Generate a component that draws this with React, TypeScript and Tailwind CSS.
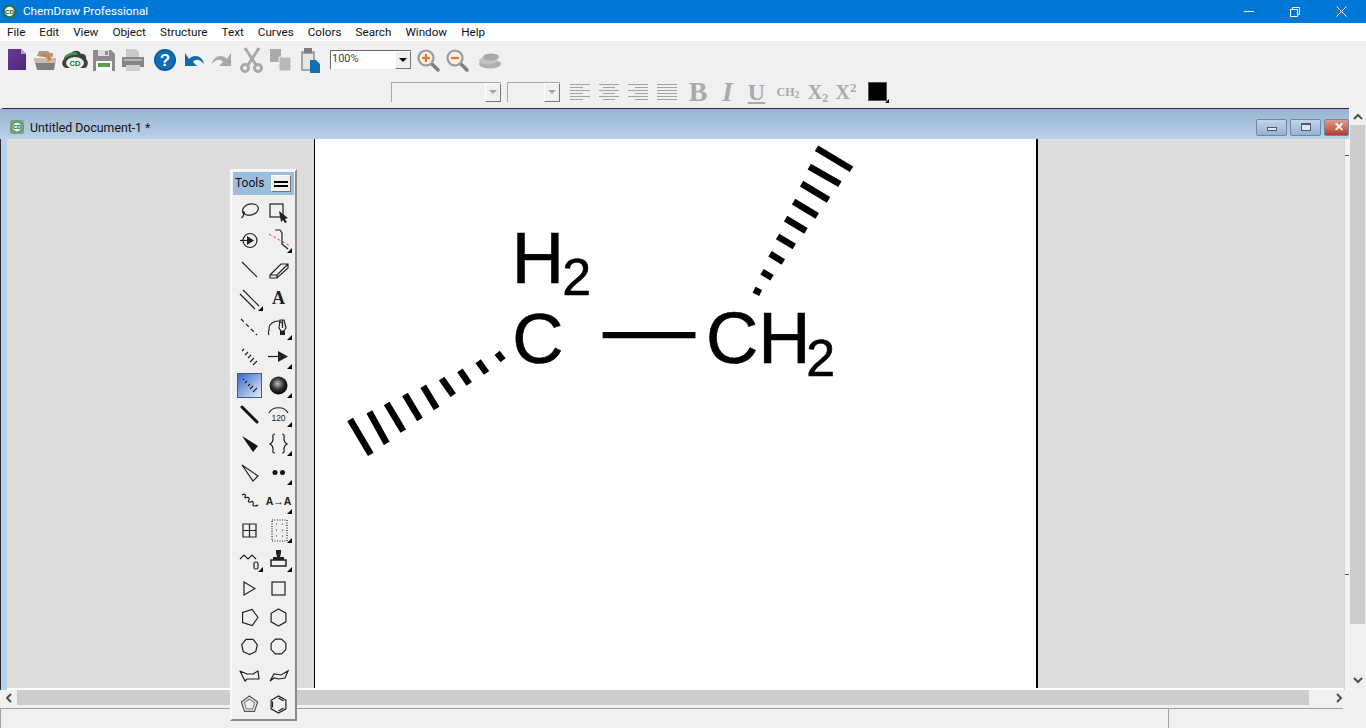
import React from 'react';

const menus = ['File', 'Edit', 'View', 'Object', 'Structure', 'Text', 'Curves', 'Colors', 'Search', 'Window', 'Help'];

const Svg: React.FC<{ w?: number; h?: number; children: React.ReactNode }> = ({ w = 29, h = 29, children }) => (
  <svg width={w} height={h} viewBox={`0 0 ${w} ${h}`} className="block shrink-0">
    {children}
  </svg>
);

const CdLogo: React.FC<{ size: number; square?: boolean }> = ({ size, square }) => (
  <svg width={size} height={size} viewBox="0 0 16 16" className="block shrink-0">
    {square && <rect x="0" y="0" width="16" height="16" rx="2" fill="#8f9a94" />}
    <circle cx="8" cy="8" r="7.5" fill={square ? '#5aa568' : '#2f6f45'} />
    <circle cx="8" cy="8" r="5" fill="#eaf5e8" />
    <text x="8" y="10.5" textAnchor="middle" fontSize="6.5" fontWeight="700" fill="#1f5a35" fontFamily="Liberation Sans, sans-serif">CD</text>
  </svg>
);

// main toolbar icons, all drawn on a 29x29 cell
const NewIcon = () => (
  <Svg>
    <defs>
      <linearGradient id="newdoc" x1="0" y1="0" x2="1" y2="1">
        <stop offset="0" stopColor="#6a3a97" />
        <stop offset="1" stopColor="#4f2773" />
      </linearGradient>
    </defs>
    <path d="M7 4h13l5 5v16H7z" fill="url(#newdoc)" />
    <path d="M20 4l5 5h-5z" fill="#b9a3cc" />
  </Svg>
);
const OpenIcon = () => (
  <Svg>
    <path d="M7 11l2-5h9l2 2h3v4z" fill="#a69b91" />
    <path d="M4 13h22l-2 12H7z" fill="#7f7f7f" />
    <path d="M4 13h22l-1 5H5z" fill="#c3bdb6" />
    <path d="M9 12c3-4 7-4 9 0v-3l4 5-5 3 1-3c-2-2-5-3-9-2z" fill="#e0792b" />
  </Svg>
);
const CloudIcon = () => (
  <Svg>
    <path d="M6 23c-4-1-5-6-2-9 0-4 4-5 6-4 2-5 9-6 11-1 3-1 6 2 5 5 3 2 2 8-1 9z" fill="#3f3f3f" />
    <ellipse cx="15" cy="18" rx="9" ry="6" fill="#e8f3e6" />
    <path d="M4 14c1-6 7-6 9-7 3-1 4 1 5 3-4-1-9 0-14 4z" fill="#3d9c53" />
    <text x="15" y="21" textAnchor="middle" fontSize="7.5" fontWeight="700" fill="#1f6a38" fontFamily="Liberation Sans, sans-serif">CD</text>
  </Svg>
);
const SaveIcon = () => (
  <Svg>
    <path d="M4 5h18l4 4v17H4z" fill="#8b8b8b" />
    <rect x="9" y="5" width="11" height="6" fill="#dedede" />
    <rect x="16" y="6" width="3" height="4" fill="#8b8b8b" />
    <rect x="7" y="16" width="16" height="10" fill="#ffffff" />
    <rect x="9" y="18" width="12" height="4" fill="#5d9c48" />
  </Svg>
);
const PrintIcon = () => (
  <Svg>
    <path d="M8 4h10l3 3v6H8z" fill="#c9c9c9" />
    <path d="M4 12h22v10H4z" fill="#858585" />
    <rect x="8" y="20" width="14" height="6" fill="#cfcfcf" />
    <rect x="6" y="14" width="18" height="2" fill="#b5b5b5" />
  </Svg>
);
const HelpIcon = () => (
  <Svg>
    <circle cx="15" cy="15" r="11" fill="#0b5a9c" />
    <circle cx="15" cy="15" r="9.5" fill="#0f6cb5" />
    <text x="15" y="21" textAnchor="middle" fontSize="17" fontWeight="700" fill="#ffffff" fontFamily="Liberation Sans, sans-serif">?</text>
  </Svg>
);
const UndoIcon = ({ color = '#0d6aab' }: { color?: string }) => (
  <Svg>
    <path d="M6 8v13h12l-4-4c2-3 6-3 9 0l2 2c-1-7-9-11-15-5z" fill={color} />
  </Svg>
);
const CutIcon = () => (
  <Svg>
    <g stroke="#a9a9a9" strokeWidth="3" fill="none">
      <path d="M8 3l11 17M22 3L11 20" />
      <circle cx="8" cy="23" r="3.5" />
      <circle cx="21" cy="23" r="3.5" />
    </g>
  </Svg>
);
const CopyIcon = () => (
  <Svg>
    <path d="M4 4h11l0 13H4z" fill="#a9a9a9" />
    <path d="M13 12h12v14H13z" fill="#b8b8b8" stroke="#efefef" />
  </Svg>
);
const PasteIcon = () => (
  <Svg>
    <rect x="6" y="6" width="14" height="20" rx="1" fill="#a5a5a5" />
    <rect x="9" y="3" width="8" height="5" fill="#7d7d7d" />
    <rect x="8" y="9" width="10" height="15" fill="#e5e5e5" />
    <path d="M15 15h6l4 4v9H15z" fill="#166fb0" />
  </Svg>
);
const ZoomIcon = ({ plus }: { plus?: boolean }) => (
  <Svg>
    <path d="M19 19l6 6" stroke="#808080" strokeWidth="3.5" strokeLinecap="round" />
    <circle cx="13" cy="13" r="7.5" fill="#f6efe4" stroke="#9b9b9b" strokeWidth="2.2" />
    <path d="M9 13h8" stroke="#e0792b" strokeWidth="2.2" />
    {plus && <path d="M13 9v8" stroke="#e0792b" strokeWidth="2.2" />}
  </Svg>
);
const LayersIcon = () => (
  <Svg>
    <ellipse cx="15" cy="19" rx="11" ry="4.5" fill="#b0b0b0" />
    <ellipse cx="13" cy="15.5" rx="9" ry="4" fill="#c4c4c4" />
    <ellipse cx="16" cy="12" rx="8" ry="3.5" fill="#a8a8a8" />
  </Svg>
);

const Combo: React.FC<{ className: string; text?: string; disabled?: boolean }> = ({ className, text, disabled }) => (
  <div className={`flex shrink-0 border-t border-l ${disabled ? 'border-[#a8a8a8]' : 'border-[#6d6d6d]'} ${className}`}>
    <div className="flex-1 text-[11px] leading-[15px] pl-px text-[#444]">{text}</div>
    <div className="w-[16px] bg-[#f0f0f0] border border-[#fff] border-r-[#777] border-b-[#777] flex items-center justify-center">
      <div className={`w-0 h-0 border-x-[4px] border-x-transparent border-t-[4px] ${disabled ? 'border-t-[#a5a5a5]' : 'border-t-black'}`} />
    </div>
  </div>
);

const AlignIcon: React.FC<{ lines: [number, number][] }> = ({ lines }) => (
  <Svg w={24} h={18}>
    {lines.map(([a, b], i) => (
      <path key={i} d={`M${a} ${1.5 + i * 3}H${b}`} stroke="#a3a3a3" strokeWidth="1" />
    ))}
  </Svg>
);

const FormatText: React.FC<{ className: string; children: React.ReactNode }> = ({ className, children }) => (
  <div className={`text-[#aaaaaa] font-bold font-['Liberation_Serif',serif] shrink-0 text-center ${className}`}>{children}</div>
);

const Corner = () => <path d="M28 22v5h-5z" fill="#000" />;

const stroke = { stroke: '#222', fill: 'none', strokeWidth: 1.2 };

const poly = (n: number, r: number, rot: number) =>
  Array.from({ length: n }, (_, i) => {
    const a = rot + (i * 2 * Math.PI) / n;
    return `${(14.5 + r * Math.cos(a)).toFixed(1)},${(14.5 + r * Math.sin(a)).toFixed(1)}`;
  }).join(' ');

// palette rows, left tool then right tool
const tools: React.ReactNode[] = [
  <g key="lasso">
    <ellipse cx="15.5" cy="12.5" rx="8" ry="5.5" transform="rotate(-15 15.5 12.5)" {...stroke} />
    <path d="M8.5 15c1 2 0 4-2 6" {...stroke} />
    <circle cx="8.5" cy="15.5" r="1.2" fill="#222" />
  </g>,
  <g key="marquee">
    <rect x="6" y="7" width="13" height="13" {...stroke} />
    <path d="M15 14l9 7-3 1 2 3-2 1-2-3-2 2z" fill="#222" />
  </g>,
  <g key="rotate">
    <circle cx="15" cy="14.5" r="7" {...stroke} />
    <path d="M5 14.5h12" {...stroke} />
    <path d="M12 10l7 4.5-7 4.5z" fill="#222" />
  </g>,
  <g key="perspective">
    <path d="M5 8l21 12" stroke="#e05050" strokeWidth="1" strokeDasharray="3 2" fill="none" />
    <path d="M11 4h5l2 3v11l6 5" {...stroke} />
    <path d="M28 22v5h-5z" fill="#000" />
  </g>,
  <path key="bond" d="M7 7l15 15" {...stroke} />,
  <path key="eraser" d="M6 20l11-11h7v4L13 23H6zM6 20h7v3M13 20l11-11" {...stroke} />,
  <g key="multi">
    <path d="M5 10l15 15M8 6l16 16" {...stroke} />
    <Corner />
  </g>,
  <text key="A" x="14.5" y="20" textAnchor="middle" fontSize="18" fontWeight="700" fill="#222" fontFamily="Liberation Serif, serif">A</text>,
  <path key="dash" d="M6 6l16 16" {...stroke} strokeDasharray="4 3" />,
  <g key="pen">
    <path d="M5 22c-2-3 1-5 0-7 0-4 5-7 9-7 2 0 3 1 4 2" {...stroke} />
    <path d="M16 7h4l2 8-2 3h-3l-2-3z" {...stroke} />
    <path d="M18.5 7v8" {...stroke} />
    <rect x="16" y="18" width="5" height="4" fill="#222" />
    <Corner />
  </g>,
  <path key="hash" d="M7 9l2-2M10 13l3-3M13 16l3-3M15 20l4-4M18 23l4-4" {...stroke} />,
  <g key="arrow">
    <path d="M4 14.5h14" {...stroke} />
    <path d="M14 9l10 5.5-10 5.5z" fill="#222" />
    <Corner />
  </g>,
  <g key="hashsel">
    <defs>
      <linearGradient id="sel" x1="0" y1="0" x2="1" y2="1">
        <stop offset="0" stopColor="#3a66c8" />
        <stop offset="1" stopColor="#e4f2fb" />
      </linearGradient>
    </defs>
    <rect x="2.5" y="2.5" width="24" height="24" fill="url(#sel)" stroke="#3d5a9a" />
    <path d="M8 9l1-1M10 12l2-2M13 15l2-2M15 18l3-3M18 21l4-4" stroke="#222" strokeWidth="1.2" />
  </g>,
  <g key="sphere">
    <defs>
      <radialGradient id="ball" cx="0.45" cy="0.4" r="0.6">
        <stop offset="0" stopColor="#bdbdbd" />
        <stop offset="0.55" stopColor="#333" />
        <stop offset="1" stopColor="#000" />
      </radialGradient>
    </defs>
    <circle cx="14.5" cy="14.5" r="9" fill="url(#ball)" />
    <Corner />
  </g>,
  <path key="bold" d="M7 7l15 15" stroke="#111" strokeWidth="3" strokeLinecap="round" />,
  <g key="angle">
    <path d="M5 13c3-7 16-7 19 0" {...stroke} />
    <text x="14.5" y="21" textAnchor="middle" fontSize="8.5" fill="#222" fontFamily="Liberation Sans, sans-serif">120</text>
    <Corner />
  </g>,
  <path key="wedge" d="M7 7l16 10-5 6z" fill="#111" />,
  <g key="braces">
    <path d="M11 5c-3 0-2 3-2 5 0 3-1 4-3 5 2 1 3 2 3 5 0 2-1 4 2 4M18 5c3 0 2 3 2 5 0 3 1 4 3 5-2 1-3 2-3 5 0 2 1 4-2 4" {...stroke} />
    <Corner />
  </g>,
  <path key="hollow" d="M7 7l16 11-5 5z" {...stroke} />,
  <g key="dots">
    <circle cx="11" cy="14.5" r="2.5" fill="#111" />
    <circle cx="18.5" cy="14.5" r="2.5" fill="#111" />
    <Corner />
  </g>,
  <path key="wave" d="M7 8c3-2 4 0 3 2s3-1 4 1-2 3 0 4 3-2 4 0-1 4 1 4 3 0 4-1" {...stroke} />,
  <g key="aa">
    <text x="14.5" y="18" textAnchor="middle" fontSize="10.5" fontWeight="700" fill="#222" fontFamily="Liberation Sans, sans-serif">A→A</text>
    <Corner />
  </g>,
  <path key="table" d="M8 8h13v13H8zM14.5 8v13M8 14.5h13" {...stroke} />,
  <g key="page">
    <rect x="8" y="4" width="15" height="21" stroke="#222" strokeWidth="1.2" strokeDasharray="1 1.5" fill="none" />
    <path d="M12 8h1M18 8h1M12 14h1M18 14h1M12 20h1M18 20h1" stroke="#333" />
    <Corner />
  </g>,
  <g key="chain">
    <path d="M5 14l4-4 4 4 4-4 4 4" {...stroke} />
    <rect x="19" y="17" width="4" height="7" rx="1.5" {...stroke} />
    <path d="M28 22v5h-5z" fill="#000" />
  </g>,
  <g key="stamp">
    <path d="M12 5h5v3l-1 4h4v3H9v-3h4l-1-4z" fill="#222" />
    <rect x="7" y="15" width="15" height="6" fill="none" stroke="#222" strokeWidth="1.5" />
    <Corner />
  </g>,
  <polygon key="tri" points="9,8 20,14.5 9,21" {...stroke} />,
  <rect key="sq" x="8" y="8" width="13" height="13" {...stroke} />,
  <polygon key="p5" points={poly(5, 8.5, 0)} {...stroke} />,
  <polygon key="p6" points={poly(6, 8.5, Math.PI / 2)} {...stroke} />,
  <polygon key="p7" points={poly(7, 8, Math.PI / 2)} {...stroke} />,
  <polygon key="p8" points={poly(8, 8, Math.PI / 8)} {...stroke} />,
  <path key="boat" d="M5 10l7 3 6 0 5-3 1 8-7 0-5-0-2 2z" {...stroke} strokeLinejoin="round" />,
  <path key="chair" d="M6 20l4-7 7 1 7-4-3 7-6 1-5-1z" {...stroke} />,
  <g key="cp">
    <polygon points={poly(5, 8.5, -Math.PI / 2)} {...stroke} stroke="#555" />
    <polygon points={poly(5, 5.5, -Math.PI / 2)} {...stroke} stroke="#888" />
  </g>,
  <g key="benzene">
    <polygon points={poly(6, 8.5, Math.PI / 2)} {...stroke} />
    <path d="M8.5 11.5v6M14.5 21l5-3M19.5 11l-5-3" {...stroke} />
  </g>,
];

const leftHash: number[][] = [
  [350, 420, 370.7, 455],
  [369.3, 412.3, 386.7, 444],
  [386.7, 404, 403.3, 431.7],
  [405, 395, 420, 420],
  [423.3, 386.7, 436.7, 409],
  [441.7, 379, 453.3, 395.7],
  [460, 370.7, 469.3, 384.3],
  [478.3, 361.7, 486.7, 373.3],
  [497.3, 353.3, 503.3, 360.7],
];
const rightHash: number[][] = [
  [817.3, 148.3, 852.3, 169.3],
  [810, 166.7, 840.7, 184.3],
  [802.3, 183.7, 829.3, 200],
  [794.3, 201.7, 818, 216],
  [786.3, 218.7, 806.7, 231],
  [778.3, 236.7, 795, 246.7],
  [770.7, 254, 784, 262.3],
  [762.7, 272, 772.7, 278],
  [754.7, 290, 761.3, 293.3],
];

const Molecule = () => (
  <svg viewBox="315 139 722 550" className="absolute inset-0 w-full h-full">
    {[...leftHash, ...rightHash].map(([x1, y1, x2, y2], i) => (
      <line key={i} x1={x1} y1={y1} x2={x2} y2={y2} stroke="#000" strokeWidth="6.6" />
    ))}
    <line x1="603" y1="335.5" x2="696" y2="335.5" stroke="#000" strokeWidth="6.4" />
    <g fill="#000" stroke="#000" strokeWidth="0.6" fontFamily="Liberation Sans, sans-serif">
      <text x="512" y="283" fontSize="72.6">H</text>
      <text x="562.5" y="295" fontSize="52">2</text>
      <text x="512.5" y="363" fontSize="71">C</text>
      <text x="706.5" y="363" fontSize="72.6">CH</text>
      <text x="807" y="376" fontSize="52">2</text>
    </g>
  </svg>
);

const ScrollArrow: React.FC<{ d: string }> = ({ d }) => (
  <svg width="10" height="10" viewBox="0 0 10 10" className="block shrink-0">
    <path d={d} fill="none" stroke="#505050" strokeWidth="2" />
  </svg>
);

const MdiButton: React.FC<{ className?: string; children: React.ReactNode }> = ({ className = 'w-[31px] bg-gradient-to-b from-[#c3d5ea] to-[#94b1d0]', children }) => (
  <div className={`h-[17px] rounded-[2px] border border-[#6f87a3] flex items-center justify-center shrink-0 ${className}`}>{children}</div>
);

const Palette = () => (
  <div className="absolute left-[230px] top-[169px] w-[67px] h-[552px] bg-[#f0f0f0] border-l-2 border-t-2 border-[#f8f8f8] border-r-2 border-r-[#8a8a8a] border-b-2 border-b-[#8a8a8a] px-px pt-px">
    <div className="h-[23px] bg-[#9dbddd] flex items-center justify-between pl-[2px] pr-[3px] pb-[2px]">
      <span className="text-[12px] text-[#111]">Tools</span>
      <div className="w-[20px] h-[17px] mt-[2px] bg-[#f0f0f0] border border-t-white border-l-white border-r-[#777] border-b-[#777] flex flex-col justify-center gap-[2px] px-[2px]">
        <div className="h-[2px] bg-black" />
        <div className="h-[2px] bg-black" />
      </div>
    </div>
    <div className="grid grid-cols-[29px_29px] auto-rows-[29px] justify-center pt-[2px]">
      {tools.map((t, i) => (
        <Svg key={i}>{t}</Svg>
      ))}
    </div>
  </div>
);

export default function App() {
  return (
    <div className="relative w-[1366px] h-[728px] overflow-hidden bg-[#f0f0f0] flex flex-col font-['Roboto',sans-serif]">
      {/* window title */}
      <div className="h-[23px] shrink-0 bg-[#0078d7] flex items-center text-white">
        <div className="w-[23px] flex justify-center pr-[5px]">
          <CdLogo size={15} />
        </div>
        <span className="text-[11.7px] flex-1">ChemDraw Professional</span>
        <div className="flex items-center w-[140px]">
          <div className="w-[46px] flex justify-center"><div className="w-[10px] h-px bg-white" /></div>
          <div className="w-[46px] flex justify-center">
            <svg width="10" height="10" viewBox="0 0 10 10" fill="none" stroke="#fff"><path d="M.5 2.5h7v7h-7zM2.5 2.5v-2h7v7h-2" /></svg>
          </div>
          <div className="w-[46px] flex justify-center">
            <svg width="11" height="11" viewBox="0 0 11 11" stroke="#fff"><path d="M.5.5l10 10M10.5.5l-10 10" /></svg>
          </div>
        </div>
      </div>

      {/* menu */}
      <div className="h-[18px] shrink-0 bg-white flex items-center pl-[7px] pt-[2px] gap-[14px] text-[11.7px] text-[#111]">
        {menus.map((m) => (
          <span key={m}>{m}</span>
        ))}
      </div>

      {/* main toolbar */}
      <div className="h-[31px] shrink-0 flex items-center pl-[1px] pt-[6px]">
        <NewIcon />
        <OpenIcon />
        <div className="w-[1px]" />
        <CloudIcon />
        <SaveIcon />
        <PrintIcon />
        <div className="w-[3px]" />
        <HelpIcon />
        <UndoIcon />
        <div className="-scale-x-100">
          <UndoIcon color="#a9a9a9" />
        </div>
        <CutIcon />
        <CopyIcon />
        <PasteIcon />
        <div className="w-[6px]" />
        <Combo className="w-[81px] h-[19px] bg-white" text="100%" />
        <div className="w-[2px]" />
        <ZoomIcon plus />
        <ZoomIcon />
        <div className="w-[4px]" />
        <LayersIcon />
      </div>

      {/* format toolbar */}
      <div className="h-[36px] shrink-0 flex items-center pl-[391px] pt-[3px]">
        <Combo disabled className="w-[110px] h-[20px]" />
        <div className="w-[6px]" />
        <Combo disabled className="w-[53px] h-[20px]" />
        <div className="w-[8px]" />
        <div className="flex gap-[5px] items-center">
          <AlignIcon lines={[[2, 22], [2, 15], [2, 22], [2, 15], [2, 22], [2, 15]]} />
          <AlignIcon lines={[[2, 22], [6, 18], [2, 22], [6, 18], [2, 22], [6, 18]]} />
          <AlignIcon lines={[[2, 22], [9, 22], [2, 22], [9, 22], [2, 22], [9, 22]]} />
          <AlignIcon lines={[[2, 22], [2, 22], [2, 22], [2, 22], [2, 22], [2, 22]]} />
        </div>
        <FormatText className="w-[30px] ml-[4px] text-[28px] leading-[26px]">B</FormatText>
        <FormatText className="w-[29px] text-[28px] leading-[26px] italic">I</FormatText>
        <FormatText className="w-[29px] text-[24px] leading-[24px] underline underline-offset-2">U</FormatText>
        <FormatText className="w-[34px] text-[12px] leading-[20px]">CH<sub className="text-[10px]">2</sub></FormatText>
        <FormatText className="w-[26px] text-[20px] leading-[22px]">X<sub className="text-[12px]">2</sub></FormatText>
        <FormatText className="w-[30px] text-[20px] leading-[22px]">X<sup className="text-[13px]">2</sup></FormatText>
        <div className="relative ml-[7px] w-[19px] h-[19px] bg-black border border-[#555] shrink-0">
          <div className="absolute -right-[3px] -bottom-[3px] w-0 h-0 border-l-[4px] border-l-transparent border-b-[4px] border-b-black" />
        </div>
      </div>

      {/* MDI area */}
      <div className="flex-1 flex min-h-0">
        <div className="flex-1 min-w-0 flex flex-col">
          {/* document window */}
          <div className="h-[582px] shrink-0 flex flex-col border-t border-[#2a2f36] rounded-tl-[4px] overflow-hidden">
            <div className="h-[30px] shrink-0 bg-gradient-to-b from-[#99b4d1] to-[#b9d1ea] flex items-center pl-[10px] pt-[6px]">
              <CdLogo size={14} square />
              <span className="text-[12.3px] leading-[16px] pt-px text-[#111] ml-[6px] flex-1">Untitled Document-1 *</span>
              <div className="flex gap-[3px] items-center overflow-hidden">
                <MdiButton>
                  <div className="w-[10px] h-[4px] mt-[4px] bg-[#dbe6f1] border border-[#4a5a6d]" />
                </MdiButton>
                <MdiButton>
                  <div className="w-[10px] h-[8px] bg-[#dbe6f1] border border-[#4a5a6d] border-t-2" />
                </MdiButton>
                <MdiButton className="w-[25px] bg-gradient-to-b from-[#df9c90] to-[#b23a2a] justify-start pl-[9px]">
                  <span className="text-white text-[12px] font-bold leading-none">✕</span>
                </MdiButton>
              </div>
            </div>
            <div className="flex-1 min-h-0 flex bg-[#b9d1ea] border-l border-[#2a2f36]">
              <div className="w-[6px] shrink-0" />
              <div className="flex-1 min-w-0 flex bg-[#dcdcdc] pl-[307px] border-b-2 border-white">
                <div className="relative w-[724px] shrink-0 bg-white border-l border-black border-r-2 overflow-hidden">
                  <Molecule />
                </div>
              </div>
              {/* inner scrollbar, cut off by the frame */}
              <div className="w-[5px] shrink-0 bg-[#f4f4f4] border-l border-[#d6d6d6] flex flex-col items-center pt-[16px]">
                <div className="w-[4px] h-px bg-[#555]" />
                <div className="w-[4px] h-px bg-[#555] mt-[418px]" />
              </div>
            </div>
          </div>

          {/* horizontal scrollbar */}
          <div className="h-[15px] shrink-0 flex items-center justify-between">
            <div className="w-[17px] flex justify-center"><ScrollArrow d="M7 1L3 5l4 4" /></div>
            <div className="flex-1 h-full">
              <div className="w-[1292px] h-full bg-[#cdcdcd]" />
            </div>
            <div className="w-[17px] flex justify-center pr-[3px]"><ScrollArrow d="M3 1l4 4-4 4" /></div>
          </div>

          {/* status bar */}
          <div className="flex-1 mt-[3px] border-t border-[#a0a0a0] border-l flex mr-[6px]">
            <div className="w-[1168px] shrink-0 border-r border-[#a0a0a0]" />
          </div>
        </div>

        {/* vertical scrollbar */}
        <div className="w-[17px] shrink-0 flex flex-col items-center pt-[4px]">
          <ScrollArrow d="M1 7l4-4 4 4" />
          <div className="w-[15px] h-[499px] mt-[3px] bg-[#cdcdcd]" />
          <div className="mt-[51px]">
            <ScrollArrow d="M1 3l4 4 4-4" />
          </div>
        </div>
      </div>

      <Palette />
    </div>
  );
}
